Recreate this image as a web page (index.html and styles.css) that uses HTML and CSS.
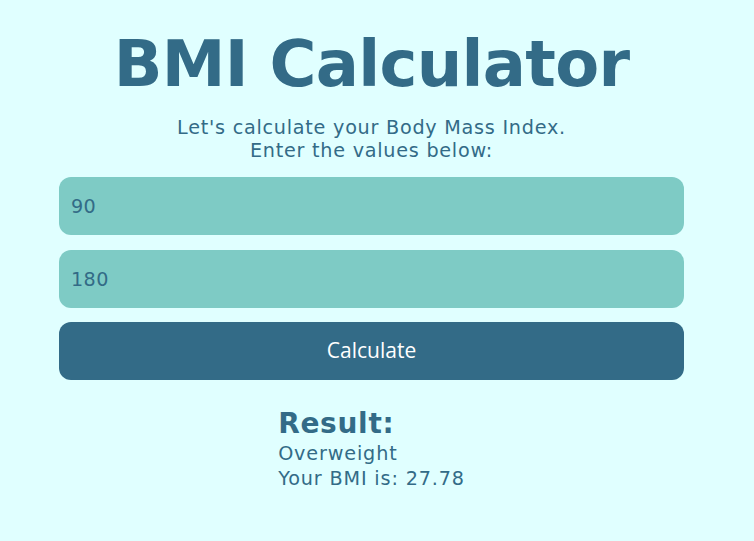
FILE: index.html
```html
<!DOCTYPE html>
<html lang="en">
<head>
<meta charset="utf-8">
<title>BMI Calculator</title>
<link rel="stylesheet" href="styles.css">
</head>
<body>
<main class="app">
  <h1 class="title">BMI Calculator</h1>
  <p class="intro">Let's calculate your Body Mass Index.<br>Enter the values below:</p>
  <form class="form">
    <input class="field" type="text" value="90">
    <input class="field" type="text" value="180">
    <button class="btn" type="button">Calculate</button>
  </form>
  <section class="result">
    <h2 class="result-title">Result:</h2>
    <div class="result-line">Overweight</div>
    <div class="result-line">Your BMI is: 27.78</div>
  </section>
</main>
</body>
</html>
```
FILE: styles.css
```css
html, body {
  margin: 0;
  padding: 0;
  background: #e0ffff;
}
body {
  font-family: "DejaVu Sans", Verdana, sans-serif;
  color: #336b87;
}
.app {
  width: 625px;
  margin-left: 59px;
  display: flex;
  flex-direction: column;
  align-items: stretch;
}
.title {
  margin: 26px 0 0;
  font-size: 64px;
  line-height: 76px;
  font-weight: bold;
  letter-spacing: -0.7px;
  text-align: center;
}
.intro {
  margin: 14px 0 0;
  font-size: 19.2px;
  line-height: 23px;
  letter-spacing: 0.75px;
  text-align: center;
}
.intro-first {
  padding-left: 12px;
}
.form {
  margin-top: 15px;
  display: flex;
  flex-direction: column;
  gap: 15px;
}
.field {
  box-sizing: border-box;
  height: 58px;
  border: none;
  border-radius: 12px;
  background: #7ecbc5;
  color: #336b87;
  font-family: "DejaVu Sans", Verdana, sans-serif;
  font-size: 19.2px;
  letter-spacing: 0.4px;
  padding: 0 12px;
  outline: none;
}
.btn {
  box-sizing: border-box;
  height: 58px;
  margin-top: -1px;
  border: none;
  border-radius: 12px;
  background: #336b87;
  color: #ffffff;
  font-family: "Open Sans", "Noto Sans", sans-serif;
  font-size: 21px;
  padding: 0 0 2px;
}
.result {
  align-self: center;
  margin-top: 28px;
}
.result-title {
  margin: 0 0 1px;
  font-size: 28px;
  line-height: 32px;
  font-weight: bold;
  letter-spacing: 0.7px;
}
.result-line {
  font-size: 19.2px;
  line-height: 25px;
  letter-spacing: 0.85px;
}
```
